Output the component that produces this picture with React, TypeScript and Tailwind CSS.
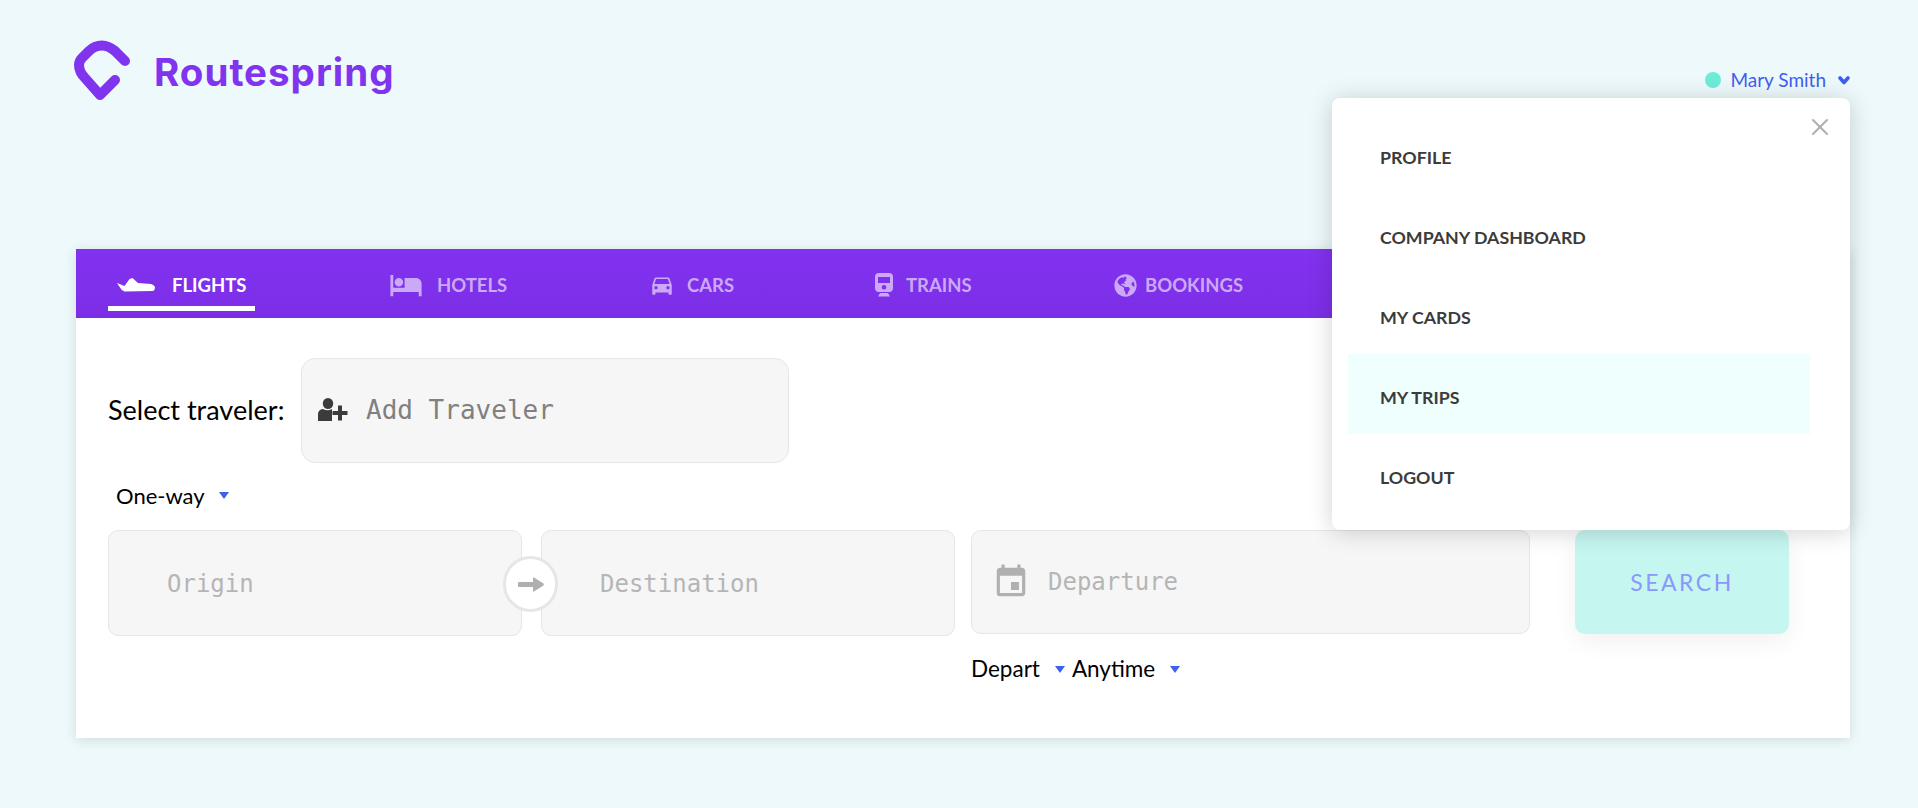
import { FaGlobeAmericas } from "react-icons/fa";
import { MdDirectionsCar, MdEvent, MdHotel } from "react-icons/md";
import { X } from "lucide-react";

const menuItems = ["PROFILE", "COMPANY DASHBOARD", "MY CARDS", "MY TRIPS", "LOGOUT"];

function Logo() {
  return (
    <svg width="60" height="62" viewBox="0 0 60 62" fill="none" className="shrink-0">
      <path
        d="M53 21 L43 11 C38 7 34 5.5 30 5.5 C25 5.5 21 7 17 11 L10 18 C8 20 7 22 7 25 C7 30 9 34 13 38 L28 55 L43 40"
        stroke="#8034ee"
        strokeWidth="10"
        strokeLinecap="round"
        strokeLinejoin="round"
      />
    </svg>
  );
}

function Plane() {
  return (
    <svg width="38" height="14" viewBox="0 0 38 14" fill="currentColor">
      <path d="M0 5 L7.5 8 L12.5 1 L15.5 0 L21 5 L34 6 Q38 7.5 38 9.5 Q38 12 36 13 L7.5 13.5 Q4 12 3 9.5 Z" />
    </svg>
  );
}

function Train() {
  return (
    <svg width="18" height="24" viewBox="0 0 18 24" fill="currentColor">
      <path
        fillRule="evenodd"
        d="M4 0 H14 Q18 0 18 4 V15 Q18 19 14 19 H4 Q0 19 0 15 V4 Q0 0 4 0 Z M3 4 V10 H15 V4 Z M9 12 A2.3 2.3 0 1 0 9 16.6 A2.3 2.3 0 1 0 9 12 Z"
      />
      <path d="M5 20 H13 L15 23.5 H3 Z" />
    </svg>
  );
}

function UserAdd() {
  return (
    <svg width="30" height="23" viewBox="0 0 30 23" fill="#3b3b3b" className="shrink-0 -mt-[2px]">
      <ellipse cx="10" cy="5.5" rx="5.2" ry="5.5" />
      <path d="M0 23 V16.5 Q0 11.5 5 11 Q9.5 13.5 14 11 V23 Z" />
      <path d="M20 7.5 H24 V13 H29.5 V17 H24 V22.5 H20 V17 H14.5 V13 H20 Z" />
    </svg>
  );
}

function ArrowIcon() {
  return (
    <svg width="26" height="15" viewBox="0 0 26 15" fill="#b0b0b0">
      <path d="M1 5 H15 V1 Q15 0 16 0.5 L25.5 6.5 Q26 7.5 25.5 8.5 L16 14.5 Q15 15 15 14 V10 H1 Q0 10 0 9 V6 Q0 5 1 5 Z" />
    </svg>
  );
}

function Chevron() {
  return (
    <svg width="12" height="9" viewBox="0 0 12 9" fill="none" stroke="currentColor" strokeWidth="3.6" strokeLinecap="round" strokeLinejoin="round">
      <path d="M2 2 L6 6.5 L10 2" />
    </svg>
  );
}

function Tab({ icon, label, active, width, gap }: { icon: React.ReactNode; label: string; active?: boolean; width: string; gap: string }) {
  return (
    <div className={`flex items-center h-[57px] pb-[9px] ${width} ${gap} ${active ? "text-white" : "text-[#cba8f8]"}`}>
      {icon}
      <span className="text-[18.5px] font-bold leading-none">{label}</span>
    </div>
  );
}

function Caret({ className }: { className?: string }) {
  return <span className={`w-0 h-0 border-x-[5px] border-x-transparent border-t-[7px] border-t-[#3f5ff0] ${className ?? ""}`} />;
}

function Field({ label, className, children }: { label: string; className: string; children?: React.ReactNode }) {
  return (
    <div className={`flex items-center rounded-[10px] border border-[#e6e6e6] bg-[#f6f6f6] ${className}`}>
      {children}
      <span className="font-['DejaVu_Sans_Mono',monospace] text-[24px] text-[#b5b5b5]">{label}</span>
    </div>
  );
}

export default function App() {
  return (
    <div className="relative min-h-[808px] bg-[#eef9fc] pl-[76px] pr-[68px] font-['Lato',sans-serif] overflow-hidden">
      <header className="relative flex justify-between h-[249px]">
        <div className="flex items-start pt-[40px] -ml-[4px]">
          <Logo />
          <span className="ml-[22px] mt-[9px] font-['Inter',sans-serif] text-[38.5px] font-bold leading-[46px] tracking-[1px] text-[#8034ee]">Routespring</span>
        </div>
        <div className="flex items-center h-fit mt-[68px] text-[#3f5ff0]">
          <span className="w-4 h-4 rounded-full bg-[#6eecd8]" />
          <span className="ml-[9px] text-[19px] leading-6">Mary Smith</span>
          <span className="ml-[12px]">
            <Chevron />
          </span>
        </div>

        {/* account menu */}
        <div className="absolute right-0 top-[98px] z-10 w-[518px] h-[432px] py-4 pl-4 pr-10 bg-white rounded-lg shadow-[0_2px_24px_rgba(0,0,0,0.18)]">
          <X className="absolute right-[16px] top-[15px] text-[#b0b0b0]" size={28} strokeWidth={1.8} />
          {menuItems.map((item) => (
            <div key={item} className={`flex items-center h-20 pl-8 pt-[6px] text-[17.8px] font-bold text-[#3b3b3b] ${item === "MY TRIPS" ? "bg-[#eefffe]" : ""}`}>
              {item}
            </div>
          ))}
        </div>
      </header>

      <main className="h-[489px] bg-white shadow-[0_2px_12px_rgba(0,0,0,0.12)]">
        <nav className="flex h-[69px] pl-8 pt-[12px] bg-linear-to-b from-[#8232f0] to-[#7c2ee6]">
          <div className="relative">
            <Tab active icon={<Plane />} label="FLIGHTS" width="w-[147px] pl-[9px]" gap="gap-[17px]" />
            <span className="absolute left-0 bottom-[7px] w-[147px] h-[5px] bg-white" />
          </div>
          <Tab icon={<MdHotel size={34} />} label="HOTELS" width="w-[260px] ml-[134px]" gap="gap-[14px]" />
          <Tab icon={<MdDirectionsCar size={26} />} label="CARS" width="w-[226px]" gap="gap-[12px]" />
          <Tab icon={<Train />} label="TRAINS" width="w-[239px]" gap="gap-[13px]" />
          <Tab icon={<FaGlobeAmericas size={23} />} label="BOOKINGS" width="w-[200px]" gap="gap-2" />
        </nav>

        <div className="pl-8 pt-10">
          <div className="flex items-center">
            <span className="w-[193px] text-[27px] text-black">Select traveler:</span>
            <div className="flex items-center w-[488px] h-[105px] rounded-[14px] border border-[#e6e6e6] bg-[#f6f6f6] pl-4">
              <UserAdd />
              <span className="ml-[18px] font-['DejaVu_Sans_Mono',monospace] text-[26px] text-[#808080]">Add Traveler</span>
            </div>
          </div>

          <div className="flex items-center h-[67px] pl-2 pb-[2px]">
            <span className="text-[22px] text-black">One-way</span>
            <Caret className="ml-[14px]" />
          </div>

          <div className="flex items-start">
            <div className="relative flex gap-[19px]">
              <Field label="Origin" className="w-[414px] h-[106px] pl-[58px] pt-[2px]" />
              <Field label="Destination" className="w-[414px] h-[106px] pl-[58px] pt-[2px]" />
              <div className="absolute left-[395px] top-[26px] flex items-center justify-center w-[55px] h-[56px] rounded-full border-[3px] border-[#e6e6e6] bg-white">
                <ArrowIcon />
              </div>
            </div>
            <div className="ml-4">
              <Field label="Departure" className="w-[559px] h-[104px] pl-5">
                <MdEvent className="text-[#b0b0b0] mr-[18px]" size={38} />
              </Field>
              <div className="flex items-center mt-[21px] text-[22.5px] leading-7 text-black">
                <span>Depart</span>
                <Caret className="ml-[15px]" />
                <span className="ml-[7px]">Anytime</span>
                <Caret className="ml-[15px]" />
              </div>
            </div>
            <div className="ml-[45px] flex items-center justify-center w-[214px] h-[104px] rounded-[10px] bg-[#c6f6f0] text-[23px] tracking-[2.5px] text-[#8b98fc] shadow-[0_8px_24px_rgba(0,0,0,0.06)]">
              SEARCH
            </div>
          </div>
        </div>
      </main>
    </div>
  );
}
